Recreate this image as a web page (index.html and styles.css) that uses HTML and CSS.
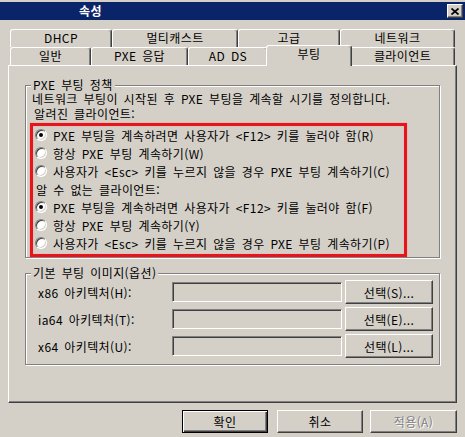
FILE: index.html
```html
<!DOCTYPE html>
<html lang="ko">
<head>
<meta charset="utf-8">
<title>속성</title>
<link rel="stylesheet" href="styles.css">
</head>
<body>
<div class="window">
  <div class="titlebar">
    <span class="title">속성</span>
    <span class="close"><svg width="8" height="7" viewBox="0 0 8 7"><path d="M0.5 0.5L7.5 6.5M7.5 0.5L0.5 6.5" stroke="#000" stroke-width="1.7" fill="none"/></svg></span>
  </div>
  <div class="tabs">
    <div class="tabrow">
      <div class="tab t-dhcp">DHCP</div>
      <div class="tab t-multi">멀티캐스트</div>
      <div class="tab t-adv">고급</div>
      <div class="tab t-net">네트워크</div>
    </div>
    <div class="tabrow">
      <div class="tab t-gen">일반</div>
      <div class="tab t-pxe">PXE 응답</div>
      <div class="tab t-ad">AD DS</div>
      <div class="tab t-boot selected">부팅</div>
      <div class="tab t-client">클라이언트</div>
    </div>
  </div>
  <div class="panel">
    <fieldset class="group g1">
      <legend>PXE 부팅 정책</legend>
      <p class="desc">네트워크 부팅이 시작된 후 PXE 부팅을 계속할 시기를 정의합니다.</p>
      <p class="sub">알려진 클라이언트:</p>
      <div class="redbox">
        <div class="opt"><span class="radio on"></span>PXE 부팅을 계속하려면 사용자가 &lt;F12&gt; 키를 눌러야 함(R)</div>
        <div class="opt"><span class="radio"></span>항상 PXE 부팅 계속하기(W)</div>
        <div class="opt"><span class="radio"></span>사용자가 &lt;Esc&gt; 키를 누르지 않을 경우 PXE 부팅 계속하기(C)</div>
        <div class="opt label">알 수 없는 클라이언트:</div>
        <div class="opt"><span class="radio on"></span>PXE 부팅을 계속하려면 사용자가 &lt;F12&gt; 키를 눌러야 함(F)</div>
        <div class="opt"><span class="radio"></span>항상 PXE 부팅 계속하기(Y)</div>
        <div class="opt"><span class="radio"></span>사용자가 &lt;Esc&gt; 키를 누르지 않을 경우 PXE 부팅 계속하기(P)</div>
      </div>
    </fieldset>
    <fieldset class="group g2">
      <legend>기본 부팅 이미지(옵션)</legend>
      <div class="row"><span class="rlabel">x86 아키텍처(H):</span><span class="field"></span><span class="btn sel">선택(S)...</span></div>
      <div class="row"><span class="rlabel">ia64 아키텍처(T):</span><span class="field"></span><span class="btn sel">선택(E)...</span></div>
      <div class="row"><span class="rlabel">x64 아키텍처(U):</span><span class="field"></span><span class="btn sel">선택(L)...</span></div>
    </fieldset>
  </div>
  <div class="buttons">
    <span class="btn dlg default">확인</span>
    <span class="btn dlg cancel">취소</span>
    <span class="btn dlg apply disabled">적용(A)</span>
  </div>
</div>
</body>
</html>
```
FILE: styles.css
```css
* { box-sizing: border-box; }
html, body { margin: 0; padding: 0; }
body {
  background: #d4d0c8;
  font-family: "Noto Sans CJK KR", "Noto Sans", sans-serif;
  font-size: 12px;
  letter-spacing: 0.4px;
  word-spacing: 2px;
  color: #000;
  width: 465px;
  height: 437px;
  overflow: hidden;
}
.titlebar {
  margin-top: 2px;
  height: 18px;
  background: #0a246a;
  display: flex;
  align-items: center;
  padding-left: 79px;
  padding-right: 2px;
}
.title { color: #fff; font-weight: bold; flex: 1; line-height: 18px; }
.close {
  width: 16px;
  height: 14px;
  background: #d4d0c8;
  border: 1px solid;
  border-color: #fff #404040 #404040 #fff;
  box-shadow: inset -1px -1px #808080;
  display: flex;
  align-items: center;
  justify-content: center;
}
.close svg { display: block; }

.tabs { padding: 9px 0 0 10px; }
.tabrow { display: flex; height: 18px; }
.tab {
  height: 18px;
  border-top: 1px solid #fff;
  border-left: 1px solid #fff;
  border-right: 1px solid #404040;
  box-shadow: inset -1px 0 #808080;
  border-radius: 3px 3px 0 0;
  text-align: center;
  line-height: 16px;
  background: #d4d0c8;
}
.t-dhcp { width: 102px; }
.t-multi { width: 126px; }
.t-adv { width: 102px; }
.t-net { width: 115px; }
.t-gen { width: 81px; }
.t-pxe { width: 97px; }
.t-ad { width: 80px; }
.t-boot { width: 82px; }
.t-client { width: 105px; }
.tab.selected {
  position: relative;
  z-index: 2;
  width: 86px;
  height: 21px;
  margin: -2px -2px 0 -2px;
  line-height: 16px;
}

.panel {
  margin-left: 8px;
  width: 449px;
  height: 338px;
  border: 1px solid;
  border-color: #fff #404040 #404040 #fff;
  box-shadow: inset -1px -1px #808080;
  padding: 0 16px;
}
.group {
  margin: 12px 0 0;
  padding: 0;
  border: 1px solid #808080;
  box-shadow: inset 1px 1px #fff, 1px 1px #fff;
  min-width: 0;
}
.group legend {
  margin-left: 5px;
  padding: 0 2px;
  line-height: 14px;
  background: #d4d0c8;
}
.desc { margin: 0 0 0 6px; line-height: 14px; }
.sub { margin: 1px 0 0 8px; line-height: 14px; }
.redbox {
  margin: 2px 0 0 4px;
  width: 377px;
  border: 3px solid #e8141c;
  box-shadow: 0 0 1px #f07070, inset 0 0 1px #f07070;
  padding: 0 0 2px 2px;
}
.opt {
  height: 18px;
  display: flex;
  align-items: center;
  white-space: nowrap;
}
.opt.label { padding-left: 1px; }
.radio {
  position: relative;
  width: 12px;
  height: 12px;
  border-radius: 50%;
  background: #fff;
  border: 1px solid;
  border-color: #808080 #fff #fff #808080;
  box-shadow: inset 1px 1px #404040, inset -1px -1px #d4d0c8;
  margin-right: 6px;
  flex: none;
}
.radio.on::after {
  content: "";
  position: absolute;
  left: 3px;
  top: 3px;
  width: 4px;
  height: 4px;
  border-radius: 50%;
  background: #000;
}

.g2 { margin-top: 8px; padding-bottom: 6px; }
.row {
  display: flex;
  align-items: center;
  height: 24px;
  margin-bottom: 3px;
}
.row:last-child { margin-bottom: 0; }
.rlabel { width: 146px; padding-left: 12px; white-space: nowrap; }
.field {
  width: 170px;
  height: 20px;
  border: 1px solid;
  border-color: #808080 #fff #fff #808080;
  box-shadow: inset 1px 1px #404040, inset -1px -1px #d4d0c8;
  margin-right: 3px;
}
.btn {
  display: flex;
  align-items: center;
  justify-content: center;
  border: 1px solid;
  border-color: #fff #404040 #404040 #fff;
  box-shadow: inset -1px -1px #808080;
  white-space: nowrap;
}
.btn.sel { width: 88px; height: 24px; }

.buttons {
  display: flex;
  justify-content: flex-end;
  padding-right: 8px;
  margin-top: 7px;
}
.btn.dlg { height: 23px; }
.default {
  width: 86px;
  border: 1px solid #000;
  box-shadow: inset 1px 1px #fff, inset -1px -1px #404040, inset -2px -2px #808080;
}
.cancel { width: 86px; margin-left: 9px; }
.apply { width: 87px; margin-left: 7px; }
.disabled { color: #808080; text-shadow: 1px 1px #fff; }
```
